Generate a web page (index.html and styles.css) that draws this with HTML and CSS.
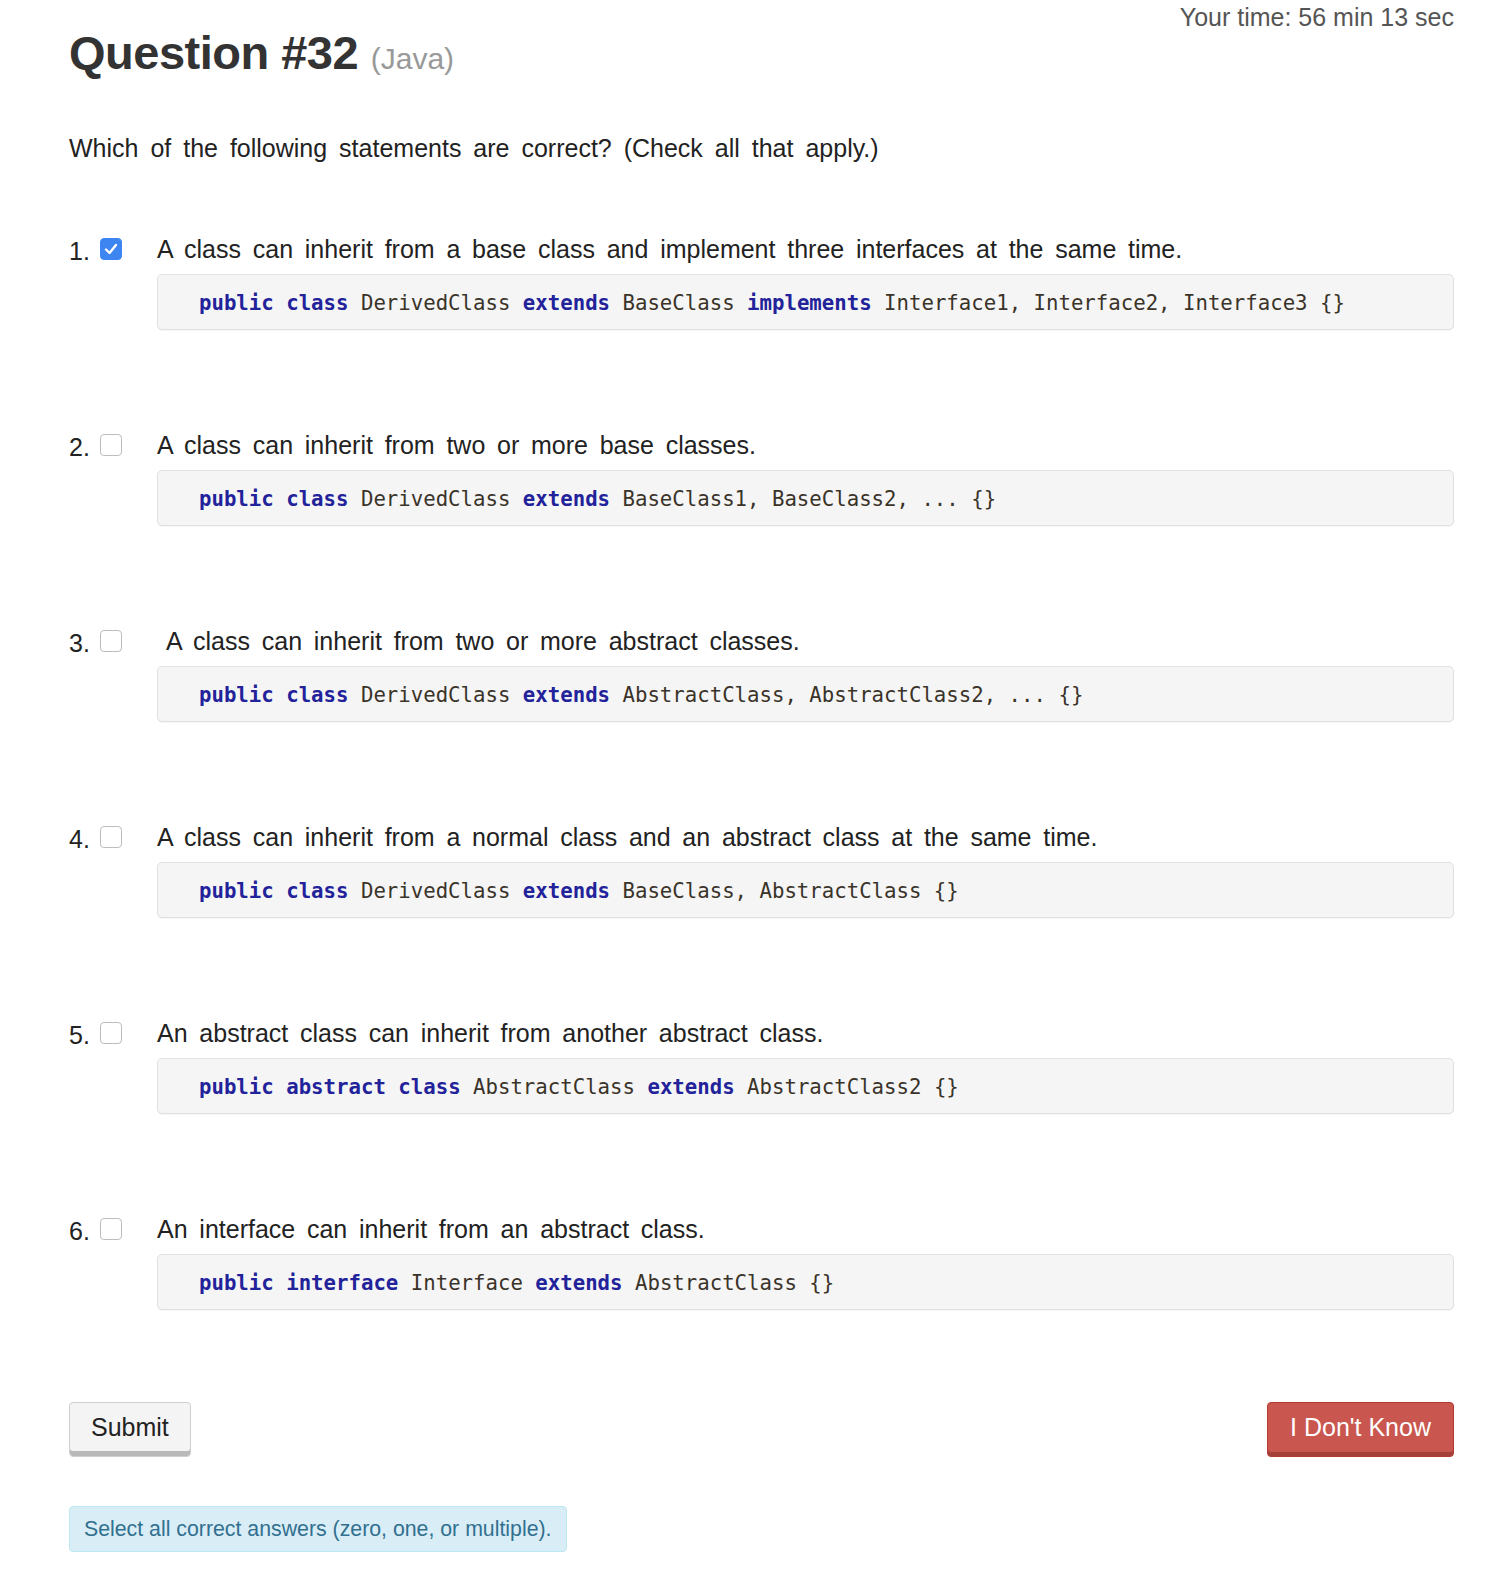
FILE: index.html
```html
<!DOCTYPE html>
<html>
<head>
<meta charset="utf-8">
<link rel="stylesheet" href="styles.css">
</head>
<body>
<div class="page">
  <div class="timer">Your time: 56 min 13 sec</div>
  <h1 class="title">Question #32 <small class="lang">(Java)</small></h1>
  <p class="prompt">Which of the following statements are correct? (Check all that apply.)</p>

  <div class="option">
    <div class="row">
      <span class="num">1.</span>
      <span class="box checked"><svg viewBox="0 0 22 22" width="22" height="22"><path d="M6 11.5l3.5 3.5 6.5-8" fill="none" stroke="#fff" stroke-width="2.4" stroke-linecap="round" stroke-linejoin="round"/></svg></span>
      <span class="text">A class can inherit from a base class and implement three interfaces at the same time.</span>
    </div>
    <pre class="code"><span class="kw">public</span> <span class="kw">class</span> DerivedClass <span class="kw">extends</span> BaseClass <span class="kw">implements</span> Interface1, Interface2, Interface3 {}</pre>
  </div>

  <div class="option">
    <div class="row">
      <span class="num">2.</span>
      <span class="box"></span>
      <span class="text">A class can inherit from two or more base classes.</span>
    </div>
    <pre class="code"><span class="kw">public</span> <span class="kw">class</span> DerivedClass <span class="kw">extends</span> BaseClass1, BaseClass2, ... {}</pre>
  </div>

  <div class="option">
    <div class="row">
      <span class="num">3.</span>
      <span class="box"></span>
      <span class="text indent">A class can inherit from two or more abstract classes.</span>
    </div>
    <pre class="code"><span class="kw">public</span> <span class="kw">class</span> DerivedClass <span class="kw">extends</span> AbstractClass, AbstractClass2, ... {}</pre>
  </div>

  <div class="option">
    <div class="row">
      <span class="num">4.</span>
      <span class="box"></span>
      <span class="text">A class can inherit from a normal class and an abstract class at the same time.</span>
    </div>
    <pre class="code"><span class="kw">public</span> <span class="kw">class</span> DerivedClass <span class="kw">extends</span> BaseClass, AbstractClass {}</pre>
  </div>

  <div class="option">
    <div class="row">
      <span class="num">5.</span>
      <span class="box"></span>
      <span class="text">An abstract class can inherit from another abstract class.</span>
    </div>
    <pre class="code"><span class="kw">public</span> <span class="kw">abstract</span> <span class="kw">class</span> AbstractClass <span class="kw">extends</span> AbstractClass2 {}</pre>
  </div>

  <div class="option">
    <div class="row">
      <span class="num">6.</span>
      <span class="box"></span>
      <span class="text">An interface can inherit from an abstract class.</span>
    </div>
    <pre class="code"><span class="kw">public</span> <span class="kw">interface</span> Interface <span class="kw">extends</span> AbstractClass {}</pre>
  </div>

  <div class="actions">
    <button class="btn btn-default">Submit</button>
    <button class="btn btn-danger">I Don't Know</button>
  </div>

  <div class="alert">Select all correct answers (zero, one, or multiple).</div>
</div>
</body>
</html>
```

FILE: styles.css
```css
html, body {
  margin: 0;
  padding: 0;
  background: #fff;
}
body {
  font-family: "Liberation Sans", Arial, sans-serif;
  color: #333;
}
.page {
  width: 1385px;
  margin-left: 69px;
  padding-bottom: 20px;
}
.timer {
  text-align: right;
  font-size: 25px;
  line-height: 28px;
  color: #555;
  padding-top: 3px;
}
.title {
  margin: 0;
  margin-top: -6px;
  font-size: 47px;
  line-height: 56px;
  font-weight: bold;
  color: #333;
  letter-spacing: -0.5px;
}
.lang {
  font-size: 30px;
  font-weight: normal;
  color: #999;
  letter-spacing: 0;
}
.prompt {
  margin: 46px 0 0 0;
  font-size: 25px;
  line-height: 30px;
  word-spacing: 5px;
  color: #222;
}
.option {
  margin-top: 71px;
}
.option + .option {
  margin-top: 100px;
}
.row {
  display: flex;
  align-items: center;
  height: 30px;
  font-size: 25px;
  color: #222;
}
.num {
  width: 31px;
  padding-top: 4px;
}
.box {
  width: 20px;
  height: 20px;
  border: 1px solid #bcbcbc;
  border-radius: 4px;
  background: #fff;
  box-sizing: content-box;
  display: inline-flex;
  margin-right: 35px;
}
.box.checked {
  background: #3d85f0;
  border-color: #3d85f0;
}
.box svg {
  display: block;
  margin: -1px;
}
.text {
  word-spacing: 4.8px;
}
.text.indent {
  padding-left: 9px;
}
.code {
  margin: 10px 0 0 88px;
  height: 56px;
  box-sizing: border-box;
  background: #f5f5f5;
  border: 1px solid #e0e0e0;
  border-radius: 5px;
  box-shadow: 0 1px 1px rgba(0,0,0,0.04);
  padding: 15px 0 0 41px;
  font-family: "DejaVu Sans Mono", "Liberation Mono", monospace;
  font-size: 20.7px;
  line-height: 26px;
  color: #3a3329;
  white-space: pre;
  overflow: hidden;
}
.kw {
  color: #22229a;
  font-weight: bold;
}
.actions {
  display: flex;
  justify-content: space-between;
  margin-top: 92px;
}
.btn {
  font-family: "Liberation Sans", Arial, sans-serif;
  font-size: 25px;
  height: 55px;
  border-radius: 4px;
  padding: 0 21px;
  cursor: pointer;
}
.btn-default {
  background: #f4f4f4;
  color: #222;
  border: 1px solid #cfcfcf;
  box-shadow: inset 0 -5px 0 #b9b9b9;
  padding-bottom: 5px;
}
.btn-danger {
  background: #c9574f;
  color: #fff;
  border: 1px solid #b33a32;
  box-shadow: inset 0 -4px 0 #a3403a;
  padding: 0 22px 4px 22px;
}
.alert {
  display: inline-block;
  margin-top: 49px;
  background: #d9edf7;
  border: 1px solid #bce8f1;
  border-radius: 4px;
  color: #31708f;
  font-size: 21.3px;
  line-height: 24px;
  padding: 10px 14px 10px 14px;
}
```
